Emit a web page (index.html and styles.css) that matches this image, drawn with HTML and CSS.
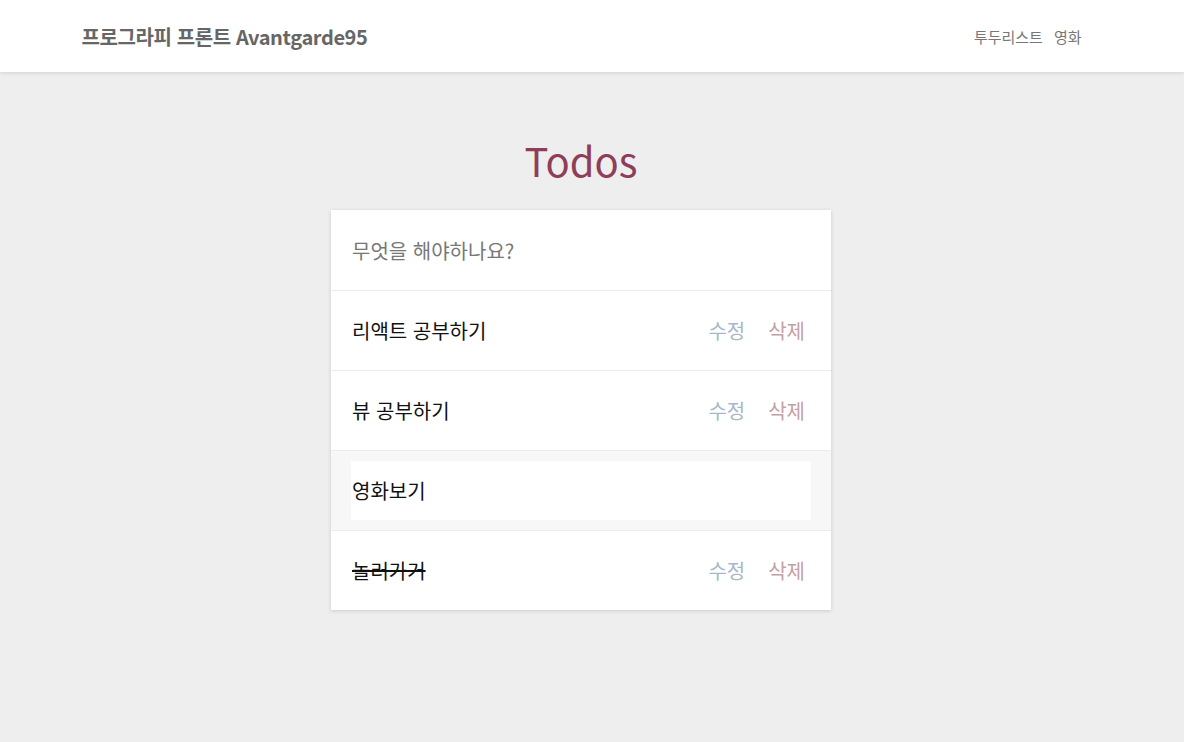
FILE: index.html
```html
<!DOCTYPE html>
<html lang="ko">
<head>
<meta charset="utf-8">
<title>Todos</title>
<link rel="stylesheet" href="styles.css">
</head>
<body>
<header class="header">
  <div class="header-inner">
    <div class="brand">프로그라피 프론트 Avantgarde95</div>
    <nav class="nav">
      <a class="nav-link">투두리스트</a>
      <a class="nav-link">영화</a>
    </nav>
  </div>
</header>
<main class="main">
  <h1 class="title">Todos</h1>
  <section class="card">
    <div class="row new-row">
      <span class="placeholder">무엇을 해야하나요?</span>
    </div>
    <div class="row">
      <span class="todo-text">리액트 공부하기</span>
      <div class="actions"><span class="btn edit">수정</span><span class="btn del">삭제</span></div>
    </div>
    <div class="row">
      <span class="todo-text">뷰 공부하기</span>
      <div class="actions"><span class="btn edit">수정</span><span class="btn del">삭제</span></div>
    </div>
    <div class="row editing">
      <div class="edit-input">영화보기</div>
    </div>
    <div class="row">
      <span class="todo-text done">놀러가거</span>
      <div class="actions"><span class="btn edit">수정</span><span class="btn del">삭제</span></div>
    </div>
  </section>
</main>
</body>
</html>
```

FILE: styles.css
```css
* { box-sizing: border-box; }
html, body {
  margin: 0;
  padding: 0;
  background: #eeeeee;
  font-family: "Noto Sans CJK KR", "Noto Sans", sans-serif;
  height: 100%;
}
.header {
  background: #ffffff;
  height: 72px;
  box-shadow: 0 1px 4px rgba(0,0,0,0.12);
  position: relative;
  padding-right: 21px;
}
.header-inner {
  width: 1000px;
  margin: 0 auto;
  height: 100%;
  display: flex;
  align-items: center;
  justify-content: space-between;
}
.brand {
  font-size: 20px;
  font-weight: 700;
  color: #666666;
  letter-spacing: -0.4px;
}
.nav {
  display: flex;
  gap: 11px;
}
.nav-link {
  font-size: 15px;
  color: #777777;
}
.main {
  display: flex;
  flex-direction: column;
  align-items: center;
  padding-right: 22px;
}
.title {
  margin: 61px 0 23px 0;
  font-size: 40px;
  font-weight: 400;
  line-height: 54px;
  color: #8e3e58;
}
.card {
  width: 500px;
  background: #ffffff;
  box-shadow: 0 1px 4px rgba(0,0,0,0.15);
}
.row {
  height: 80px;
  display: flex;
  align-items: center;
  justify-content: space-between;
  padding: 0 26px 0 21px;
  border-top: 1px solid #ececec;
  font-size: 20px;
}
.new-row { border-top: none; }
.placeholder { color: #777777; }
.todo-text { color: #111111; }
.done { text-decoration: line-through; }
.actions { display: flex; gap: 23px; }
.btn { font-size: 20px; cursor: pointer; }
.edit { color: #a6b8ca; }
.del { color: #c3a0a6; }
.editing {
  background: #f7f7f7;
  padding: 10px 20px;
}
.edit-input {
  background: #ffffff;
  width: 100%;
  height: 59px;
  display: flex;
  align-items: center;
  color: #111111;
  font-size: 20px;
  padding-left: 1px;
}
```
